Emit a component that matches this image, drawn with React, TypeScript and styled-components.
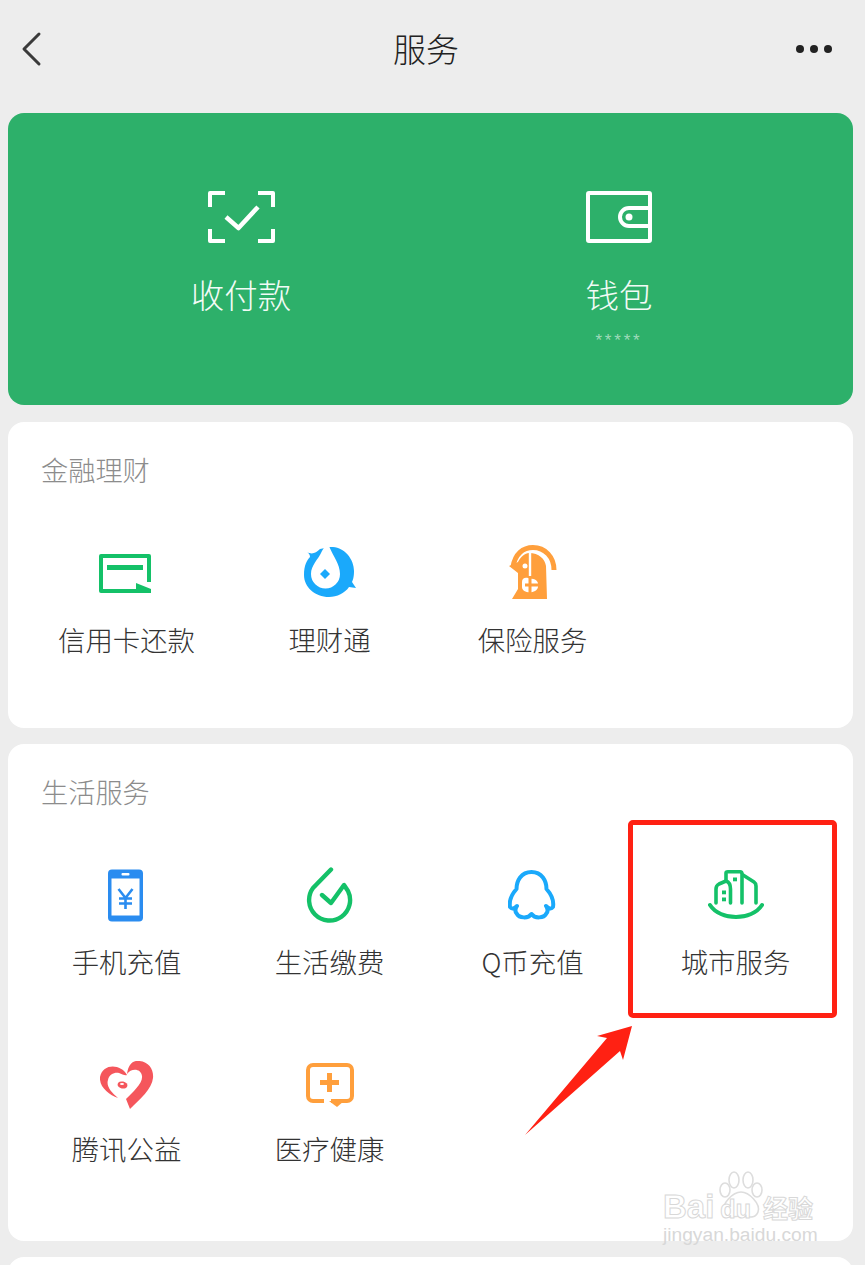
import { FC, ReactNode } from 'react';
import styled, { createGlobalStyle } from 'styled-components';

const GlobalStyle = createGlobalStyle`
  html, body {
    margin: 0;
    padding: 0;
    background: #ededed;
  }
`;

const FONT = `"Noto Sans CJK SC", "Noto Sans", sans-serif`;

const BackIcon = () => (
  <svg width='22' height='36' viewBox='0 0 22 36' fill='none' stroke='#3a3a3a' strokeWidth='3'>
    <path d='M19 3 L4 18 L19 33' strokeLinecap='round' strokeLinejoin='round' />
  </svg>
);

const MoreIcon = () => (
  <svg width='36' height='8' viewBox='0 0 36 8' fill='#222'>
    <circle cx='4' cy='4' r='4' />
    <circle cx='18' cy='4' r='4' />
    <circle cx='32' cy='4' r='4' />
  </svg>
);

const ScanIcon = () => (
  <svg width='67' height='52' viewBox='0 0 67 52' fill='none' stroke='#fff' strokeWidth='4' strokeLinejoin='round'>
    <path d='M17 2 H2 V16 M50 2 H65 V16 M17 50 H2 V38 M50 50 H65 V38' />
    <path d='M18 26 L30.5 37 L50 16' strokeWidth='4.5' />
  </svg>
);

const WalletIcon = () => (
  <svg width='66' height='52' viewBox='0 0 66 52' fill='none' stroke='#fff' strokeWidth='4' strokeLinejoin='round'>
    <rect x='2' y='2' width='62' height='48' rx='1' />
    <path d='M64 17 H43 A9 9 0 0 0 43 35 H64' />
    <circle cx='43' cy='26' r='3.5' fill='#fff' stroke='none' />
  </svg>
);

const CardIcon = () => (
  <svg width='55' height='42' viewBox='0 -2 55 42' fill='none'>
    <path d='M50 28 V2 H2 V37 H38' stroke='#14c168' strokeWidth='4' strokeLinejoin='round' />
    <rect x='8' y='11' width='36' height='5' fill='#14c168' />
    <path d='M37 29 L52 35 V39 H37 Z' fill='#14c168' />
  </svg>
);

const LicaiIcon = () => (
  <svg width='52' height='52' viewBox='0 0 52 52'>
    <path
      d='M3 5 C8 8 12 6 16 2 L26 0 C39 -1 50 11 50 24 C50 30 49 33 48 35 L52 41 L45 40 C41 46 33 50 25 50 C11 50 0 40 0 28 C0 18 3 13 6 10 C6 8 5 6 3 5 Z'
      fill='#1aa9fb'
    />
    <path d='M21 -1 L25 -1 C29 9 36 17 36 27 A14.5 14.5 0 0 1 7 27 C7 18 14 13 18 4 Z' fill='#fff' />
    <path d='M21 22 L26 27 L21 32 L16 27 Z' fill='#1aa9fb' />
  </svg>
);

const InsuranceIcon = () => (
  <svg width='48' height='56' viewBox='0 0 48 56'>
    <path d='M4 22 C6 9 14 2.5 24 2.5 C36 2.5 45 12 45 25' fill='none' stroke='#ff9f3c' strokeWidth='5' />
    <path d='M0 21 L9 17 C12 11 16 8.5 20 8 C30 8 36 14 37 21 L38 54 H3 L9 44 L9 28 Z' fill='#ff9f3c' />
    <path d='M21 7 V31' stroke='#fff' strokeWidth='2.4' fill='none' />
    <circle cx='16' cy='21' r='2.5' fill='#fff' />
    <path d='M13 37 C13 32 18 32 21 34 C27 33 30 37 29 42 C28 49 13 49 13 42 Z' fill='#fff' />
    <path d='M21 33 V48 M16 40 H30' stroke='#ff9f3c' strokeWidth='3' fill='none' />
  </svg>
);

const PhoneIcon = () => (
  <svg width='37' height='53' viewBox='0 0 37 53'>
    <rect x='0' y='0.5' width='35' height='52' rx='4' fill='#2a8cf0' />
    <rect x='3.5' y='9.5' width='28' height='37' fill='#fff' />
    <rect x='13.5' y='4' width='8' height='2.5' rx='1' fill='#fff' />
    <path
      d='M10.5 20 L17.5 29 L24.5 20 M17.5 29 V40 M11 29.5 H24 M11 34.5 H24'
      fill='none'
      stroke='#2a8cf0'
      strokeWidth='2.6'
    />
  </svg>
);

const LifeIcon = () => (
  <svg width='48' height='56' viewBox='0 0 48 56' fill='none' stroke='#14c168' strokeWidth='4.4'>
    <path d='M25 2.5 L7 21 A20.5 20.5 0 1 0 42 24 L38 18 L25 36 L16 28' strokeLinecap='round' strokeLinejoin='round' />
  </svg>
);

const QqIcon = () => (
  <svg width='49' height='50' viewBox='0 0 49 50' fill='none' stroke='#1aa9fb' strokeWidth='4' strokeLinejoin='round'>
    <path d='M23.5 2 C13 2 8.5 11 8.5 19 C4 24 1 31 2 37 C4 40 7 38 9 36 C7 39 7 42 9 44 C11 48 20 49 23.5 44 C27 49 36 48 38 44 C40 42 40 39 38 36 C40 38 43 40 45 37 C46 31 43 24 38.5 19 C38.5 11 34 2 23.5 2 Z' />
  </svg>
);

const CityIcon = () => (
  <svg width='56' height='50' viewBox='0 0 56 50' fill='none' stroke='#14c168' strokeWidth='3.6' strokeLinejoin='round' strokeLinecap='round'>
    <path d='M2 35 C12 51 44 51 54 35' strokeWidth='4' />
    <path d='M8 33 V19 C8 16 9 15 11 14 L18 11 C21 12 22.5 15 22.5 19 V33' />
    <path d='M18 11 V3 C18 2 19 1.8 20 1.8 H32 C33 1.8 34 2.5 34 4 V33' />
    <path d='M35 5 L46 12 C47.5 13 48 14 48 16 V33' />
    <rect x='14' y='20.5' width='4' height='3.8' fill='#14c168' stroke='none' />
    <rect x='14' y='27.5' width='4' height='3.8' fill='#14c168' stroke='none' />
    <rect x='25' y='7.5' width='4' height='3.8' fill='#14c168' stroke='none' />
  </svg>
);

const HeartIcon = () => (
  <svg width='54' height='48' viewBox='0 0 54 48' fill='#f5565c'>
    <path d='M36 0 C48 -1 54 8 53 17 C52 28 40 38 30 48 L26 38 C33 31 43 22 42 15 C41 7 31 7 27 13 C28 5 31 1 36 0 Z' />
    <path d='M27 14 C21 3 3 2 0 16 C-1 26 9 34 18 37 C11 31 6 25 8 19 C9 13 15 11 19 12 C22 13 25 15 27 14 Z' />
    <ellipse cx='22.5' cy='24' rx='5' ry='3.5' transform='rotate(12 22.5 24)' />
    <ellipse cx='22' cy='23' rx='2' ry='1' fill='#fff' />
  </svg>
);

const MedicalIcon = () => (
  <svg width='48' height='44' viewBox='0 0 48 44' fill='none'>
    <path
      d='M18 38 H7 A5 5 0 0 1 2 33 V7 A5 5 0 0 1 7 2 H41 A5 5 0 0 1 46 7 V33 A5 5 0 0 1 41 38 H25'
      stroke='#ff9f3c'
      strokeWidth='4'
    />
    <path d='M23 38 H38 L31 44 Z' fill='#ff9f3c' />
    <path d='M14 19.5 H33 M23.5 10 V29' stroke='#ff9f3c' strokeWidth='5' />
  </svg>
);

interface ITile {
  icon: ReactNode;
  label: string;
  tight?: boolean;
}

const finance: ITile[] = [
  { icon: <CardIcon />, label: '信用卡还款' },
  { icon: <LicaiIcon />, label: '理财通' },
  { icon: <InsuranceIcon />, label: '保险服务' },
];

const life: ITile[] = [
  { icon: <PhoneIcon />, label: '手机充值' },
  { icon: <LifeIcon />, label: '生活缴费' },
  { icon: <QqIcon />, label: 'Q币充值' },
  { icon: <CityIcon />, label: '城市服务' },
  { icon: <HeartIcon />, label: '腾讯公益', tight: true },
  { icon: <MedicalIcon />, label: '医疗健康', tight: true },
];

const Section: FC<{ title: string; tiles: ITile[]; bottom: number }> = ({ title, tiles, bottom }) => (
  <Card $bottom={bottom}>
    <CardTitle>{title}</CardTitle>
    <TileGrid>
      {tiles.map((tile) => (
        <Tile key={tile.label}>
          <TileIcon>{tile.icon}</TileIcon>
          <TileLabel $tight={tile.tight}>{tile.label}</TileLabel>
        </Tile>
      ))}
    </TileGrid>
  </Card>
);

const App: FC = () => (
  <Page>
    <GlobalStyle />
    <NavBar>
      <NavLeft>
        <BackIcon />
      </NavLeft>
      <NavTitle>服务</NavTitle>
      <NavRight>
        <MoreIcon />
      </NavRight>
    </NavBar>
    <Content>
      <PayCard>
        <PayItem>
          <ScanIcon />
          <PayLabel>收付款</PayLabel>
        </PayItem>
        <PayItem>
          <WalletIcon />
          <PayLabel>钱包</PayLabel>
          <Stars>*****</Stars>
        </PayItem>
      </PayCard>
      <Section title='金融理财' tiles={finance} bottom={70} />
      <Section title='生活服务' tiles={life} bottom={74} />
      <Card $bottom={40} />
    </Content>

    <Highlight />
    <Arrow viewBox='0 0 110 112' width='110' height='112'>
      <path d='M108 1 L73 11 L83 13 L1 110 L96 26 L99 35 Z' fill='#ff2113' />
    </Arrow>
    <Watermark>
      <Paw viewBox='0 0 50 50' width='50' height='50'>
        <g fill='#fff' stroke='#ddd' strokeWidth='1.6'>
          <ellipse cx='10' cy='20' rx='5' ry='7' />
          <ellipse cx='19' cy='10' rx='5' ry='8' />
          <ellipse cx='33' cy='10' rx='5' ry='8' />
          <ellipse cx='42' cy='20' rx='5' ry='7' />
          <path d='M26 22 C18 22 6 34 9 42 C12 50 20 46 26 46 C32 46 40 50 43 42 C46 34 34 22 26 22 Z' />
        </g>
      </Paw>
      <WatermarkMain>
        Bai<WatermarkDu>du</WatermarkDu>
        <WatermarkCn>经验</WatermarkCn>
      </WatermarkMain>
      <WatermarkSub>jingyan.baidu.com</WatermarkSub>
    </Watermark>
  </Page>
);

export default App;

const Page = styled.div`
  position: relative;
  width: 865px;
  height: 1265px;
  overflow: hidden;
  background: #ededed;
  font-family: ${FONT};
`;

const NavBar = styled.header`
  display: grid;
  grid-template-columns: 1fr auto 1fr;
  align-items: center;
  height: 98px;
  padding: 0 33px 15px 20px;
`;

const NavLeft = styled.div`
  display: flex;
`;

const NavRight = styled.div`
  display: flex;
  justify-content: flex-end;
`;

const NavTitle = styled.h1`
  margin: 0 0 3px;
  color: #222;
  font-size: 33px;
  font-weight: 300;
  line-height: 44px;
`;

const Content = styled.main`
  display: flex;
  flex-direction: column;
  gap: 16px;
  padding: 0 12px 0 8px;
`;

const PayCard = styled.section`
  display: grid;
  grid-template-columns: 378px 378px;
  height: 292px;
  margin-bottom: 1px;
  padding: 78px 0 0 44px;
  box-sizing: border-box;
  border-radius: 16px;
  background: #2db06a;
`;

const PayItem = styled.div`
  display: flex;
  flex-direction: column;
  align-items: center;
`;

const PayLabel = styled.div`
  margin-top: 29px;
  color: #f2fbf6;
  font-size: 33.5px;
  font-weight: 300;
  line-height: 44px;
`;

const Stars = styled.div`
  margin-top: 15px;
  color: rgba(255, 255, 255, 0.55);
  font-family: 'Liberation Sans', sans-serif;
  font-size: 17px;
  letter-spacing: 2.8px;
  line-height: 20px;
`;

const Card = styled.section<{ $bottom: number }>`
  padding: 28px 16px ${(p) => p.$bottom}px 17px;
  border-radius: 16px;
  background: #fff;
`;

const CardTitle = styled.h2`
  margin: 0 0 0 16px;
  color: #8c8c8c;
  font-size: 27.2px;
  font-weight: 300;
  line-height: 38px;
`;

const TileGrid = styled.div`
  display: grid;
  grid-template-columns: repeat(4, 203px);
  row-gap: 75px;
  margin-top: 55px;
`;

const Tile = styled.div`
  display: flex;
  flex-direction: column;
  align-items: center;
`;

const TileIcon = styled.div`
  display: flex;
  align-items: center;
  justify-content: center;
  height: 60px;
`;

const TileLabel = styled.div<{ $tight?: boolean }>`
  margin-top: ${(p) => (p.$tight ? 14 : 17)}px;
  color: #333;
  font-size: 27.4px;
  font-weight: 300;
  line-height: 38px;
  white-space: nowrap;
`;

const Highlight = styled.div`
  position: absolute;
  left: 628px;
  top: 820px;
  width: 199px;
  height: 188px;
  border: 5px solid #ff2113;
  border-radius: 5px;
`;

const Arrow = styled.svg`
  position: absolute;
  left: 524px;
  top: 1025px;
`;

const Watermark = styled.div`
  position: absolute;
  left: 663px;
  top: 1170px;
  width: 156px;
  height: 84px;
  font-family: 'Liberation Sans', sans-serif;
`;

const Paw = styled.svg`
  position: absolute;
  left: 52px;
  top: 0;
`;

const WatermarkMain = styled.div`
  position: absolute;
  left: 0;
  top: 17px;
  color: #fff;
  font-size: 33px;
  font-weight: 700;
  line-height: 40px;
  white-space: nowrap;
  -webkit-text-stroke: 1px #d8d8d8;
`;

const WatermarkDu = styled.span`
  font-size: 25px;
  margin-left: 6px;
`;

const WatermarkCn = styled.span`
  margin-left: 12px;
  font-family: ${FONT};
  font-size: 25px;
`;

const WatermarkSub = styled.div`
  position: absolute;
  left: 0;
  top: 55px;
  color: #d8d8d8;
  font-size: 19.2px;
  line-height: 20px;
  white-space: nowrap;
`;
